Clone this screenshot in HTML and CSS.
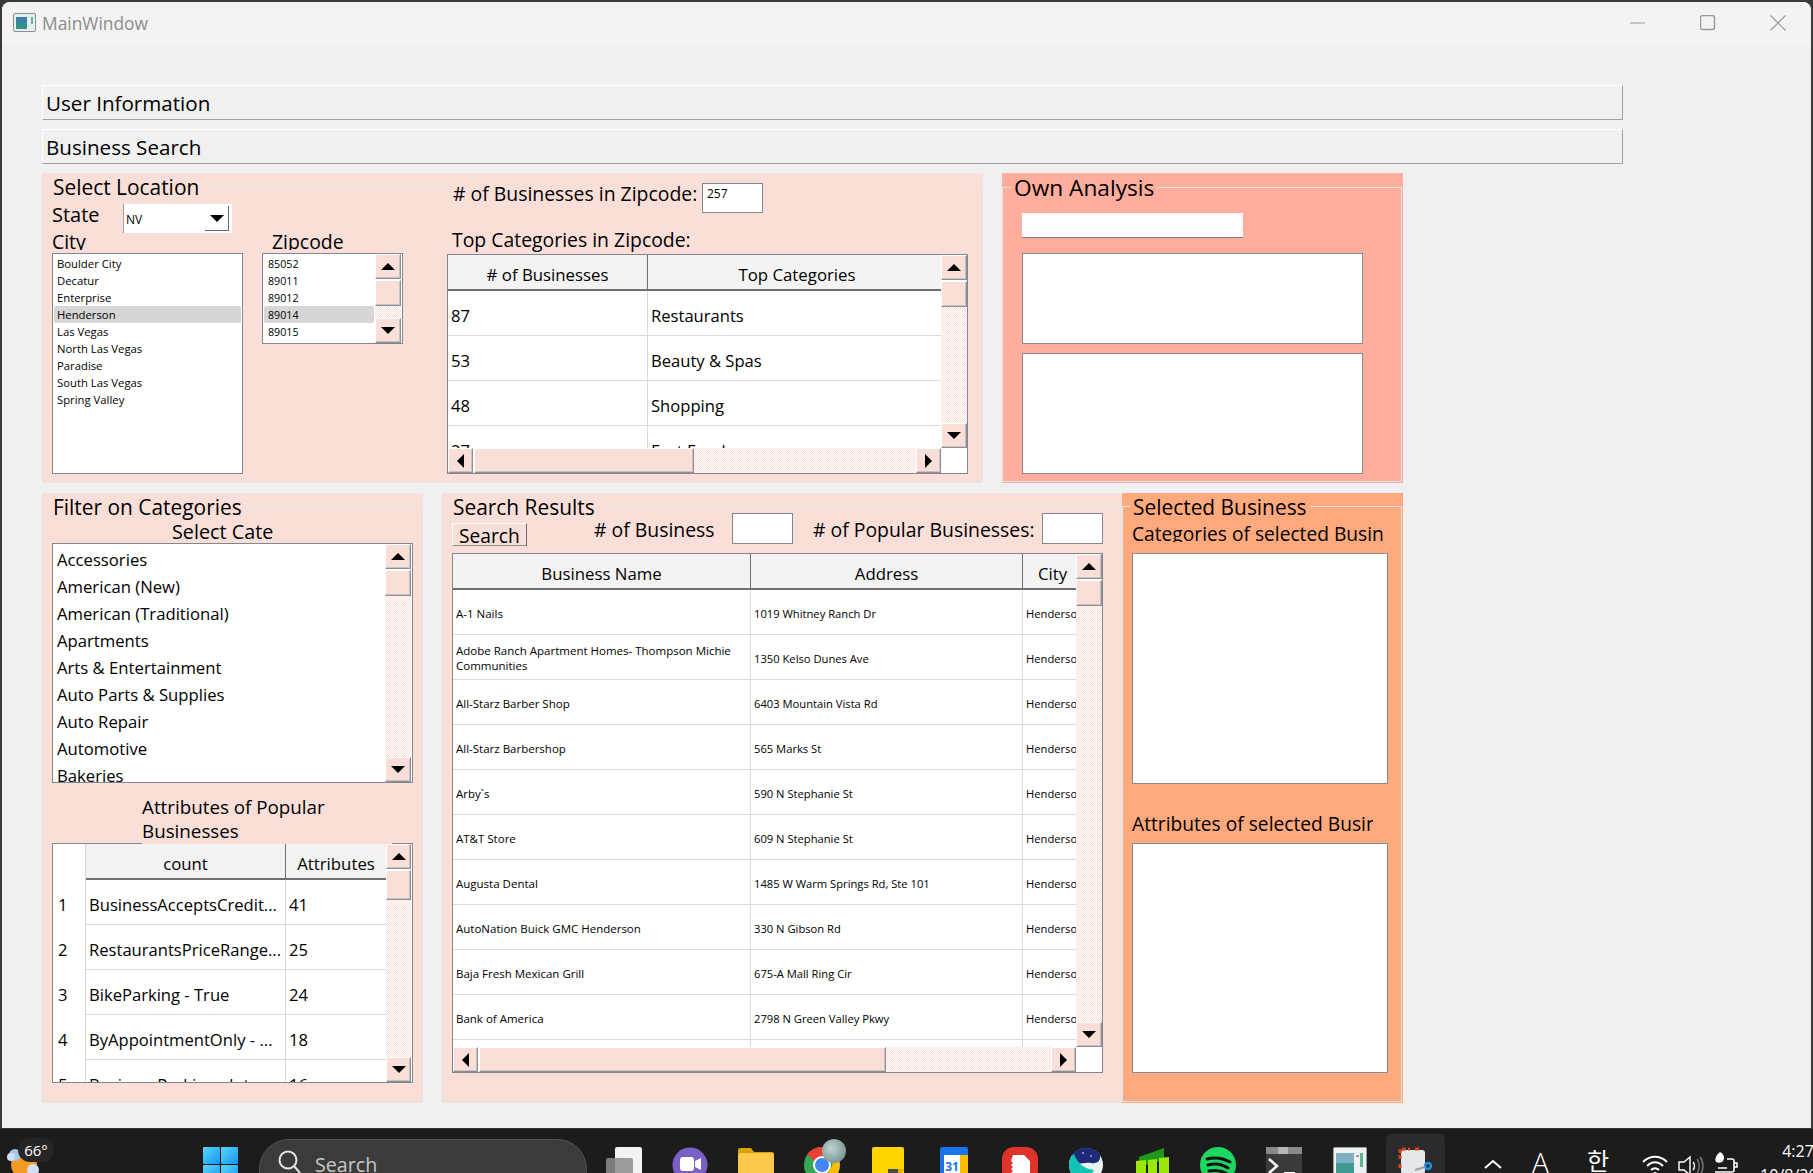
FILE: index.html
```html
<!DOCTYPE html>
<html lang="en">
<head>
  <meta charset="UTF-8" />
  <title>MainWindow</title>
  <link rel="stylesheet" href="styles.css">
</head>
<body>
  <div class="window">
    <div class="titlebar">
      <svg class="app-icon" width="23" height="19" viewBox="0 0 23 19">
        <rect x="0.5" y="0.5" width="22" height="18" rx="1.5" fill="#e9eef0" stroke="#8a8f94"/>
        <rect x="3" y="4" width="11" height="12" fill="#2f8f8a"/>
        <rect x="3" y="4" width="11" height="5" fill="#3b7fb0"/>
        <rect x="18" y="4" width="2" height="7" fill="#5bb98f"/>
      </svg>
      <span class="app-title">MainWindow</span>
      <div class="win-controls">
        <div class="win-btn"><svg width="16" height="16" viewBox="0 0 16 16"><path d="M0 8h15" stroke="#9a9a9a"/></svg></div>
        <div class="win-btn"><svg width="16" height="16" viewBox="0 0 16 16"><rect x="0.5" y="0.5" width="14" height="14" rx="2" fill="none" stroke="#9a9a9a" stroke-width="1.4"/></svg></div>
        <div class="win-btn"><svg width="16" height="16" viewBox="0 0 16 16"><path d="M0.5 0.5l15 15M15.5 0.5l-15 15" stroke="#9a9a9a" stroke-width="1.2"/></svg></div>
      </div>
    </div>

    <div class="main">
      <div class="bar">User Information</div>
      <div class="bar">Business Search</div>

      <div class="row row-top">
        <section class="panel panel-location">
          <div class="group group-location">
            <div class="loc-left">
              <div class="legend">Select Location</div>
              <div class="state-row">
                <span class="state-label">State</span>
                <div class="combo">
                  <span>NV</span>
                  <div class="combo-arrow"><i class="tri tri-down"></i></div>
                </div>
              </div>
              <div class="loc-lists">
                <div>
                  <div class="clip-label">City</div>
                  <ul class="list list-small list-city">
                    <li>Boulder City</li>
                    <li>Decatur</li>
                    <li>Enterprise</li>
                    <li class="selected">Henderson</li>
                    <li>Las Vegas</li>
                    <li>North Las Vegas</li>
                    <li>Paradise</li>
                    <li>South Las Vegas</li>
                    <li>Spring Valley</li>
                  </ul>
                </div>
                <div>
                  <div class="clip-label zip-label">Zipcode</div>
                  <div class="list-scroll list-zip">
                    <ul class="list list-small">
                      <li>85052</li>
                      <li>89011</li>
                      <li>89012</li>
                      <li class="selected">89014</li>
                      <li>89015</li>
                    </ul>
                    <div class="sb-v">
                      <div class="sb-btn"><i class="tri tri-up"></i></div>
                      <div class="sb-thumb"></div>
                      <div class="sb-track"></div>
                      <div class="sb-btn"><i class="tri tri-down"></i></div>
                    </div>
                  </div>
                </div>
              </div>
            </div>

            <div class="loc-right">
              <div class="count-row">
                <span class="count-label"># of Businesses in Zipcode:</span>
                <div class="box count-box">257</div>
              </div>
              <div class="top-label">Top Categories in Zipcode:</div>
              <div class="table-view top-table">
                <div class="table-clip">
                  <table>
                    <thead><tr><th class="w-200"># of Businesses</th><th>Top Categories</th></tr></thead>
                    <tbody>
                      <tr><td>87</td><td>Restaurants</td></tr>
                      <tr><td>53</td><td>Beauty &amp; Spas</td></tr>
                      <tr><td>48</td><td>Shopping</td></tr>
                      <tr><td>27</td><td>Fast Food</td></tr>
                    </tbody>
                  </table>
                </div>
                <div class="sb-v">
                  <div class="sb-btn"><i class="tri tri-up"></i></div>
                  <div class="sb-thumb"></div>
                  <div class="sb-track"></div>
                  <div class="sb-btn"><i class="tri tri-down"></i></div>
                </div>
                <div class="sb-h">
                  <div class="sb-btn"><i class="tri tri-left"></i></div>
                  <div class="sb-thumb thumb-top"></div>
                  <div class="sb-track"></div>
                  <div class="sb-btn"><i class="tri tri-right"></i></div>
                </div>
                <div class="corner"></div>
              </div>
            </div>
          </div>
        </section>

        <section class="panel panel-own">
          <div class="group group-own">
            <div class="legend legend-own">Own Analysis</div>
            <div class="own-input"></div>
            <div class="box own-box-a"></div>
            <div class="box own-box-b"></div>
          </div>
        </section>
      </div>

      <div class="row row-bottom">
        <section class="panel panel-filter">
          <div class="group group-stack">
            <div class="legend">Filter on Categories</div>
            <div class="select-label">Select Cate</div>
            <div class="list-scroll list-cats">
              <ul class="list list-large">
                <li>Accessories</li>
                <li>American (New)</li>
                <li>American (Traditional)</li>
                <li>Apartments</li>
                <li>Arts &amp; Entertainment</li>
                <li>Auto Parts &amp; Supplies</li>
                <li>Auto Repair</li>
                <li>Automotive</li>
                <li>Bakeries</li>
              </ul>
              <div class="sb-v">
                <div class="sb-btn"><i class="tri tri-up"></i></div>
                <div class="sb-thumb"></div>
                <div class="sb-track"></div>
                <div class="sb-btn"><i class="tri tri-down"></i></div>
              </div>
            </div>
            <div class="attr-label">Attributes of Popular Businesses</div>
            <div class="table-view attr-table">
              <div class="table-clip">
                <table>
                  <thead><tr><th class="row-head"></th><th class="w-200">count</th><th>Attributes</th></tr></thead>
                  <tbody>
                    <tr><td class="row-head">1</td><td>BusinessAcceptsCredit...</td><td>41</td></tr>
                    <tr><td class="row-head">2</td><td>RestaurantsPriceRange...</td><td>25</td></tr>
                    <tr><td class="row-head">3</td><td>BikeParking - True</td><td>24</td></tr>
                    <tr><td class="row-head">4</td><td>ByAppointmentOnly - ...</td><td>18</td></tr>
                    <tr><td class="row-head">5</td><td>BusinessParking - lot</td><td>16</td></tr>
                  </tbody>
                </table>
              </div>
              <div class="sb-v">
                <div class="sb-btn"><i class="tri tri-up"></i></div>
                <div class="sb-thumb thumb-attr"></div>
                <div class="sb-track"></div>
                <div class="sb-btn"><i class="tri tri-down"></i></div>
              </div>
            </div>
          </div>
        </section>

        <section class="panel panel-results">
          <div class="group group-stack">
            <div class="legend">Search Results</div>
            <div class="results-head">
              <div class="search-btn">Search</div>
              <span class="res-label res-label-a"># of Business</span>
              <div class="box res-box"></div>
              <span class="res-label res-label-b"># of Popular Businesses:</span>
              <div class="box res-box"></div>
            </div>
            <div class="table-view results-table">
              <div class="table-clip">
                <table>
                  <thead><tr><th class="w-298">Business Name</th><th class="w-272">Address</th><th>City</th></tr></thead>
                  <tbody>
                    <tr><td>A-1 Nails</td><td>1019 Whitney Ranch Dr</td><td>Henderson</td></tr>
                    <tr><td>Adobe Ranch Apartment Homes- Thompson Michie Communities</td><td>1350 Kelso Dunes Ave</td><td>Henderson</td></tr>
                    <tr><td>All-Starz Barber Shop</td><td>6403 Mountain Vista Rd</td><td>Henderson</td></tr>
                    <tr><td>All-Starz Barbershop</td><td>565 Marks St</td><td>Henderson</td></tr>
                    <tr><td>Arby`s</td><td>590 N Stephanie St</td><td>Henderson</td></tr>
                    <tr><td>AT&amp;T Store</td><td>609 N Stephanie St</td><td>Henderson</td></tr>
                    <tr><td>Augusta Dental</td><td>1485 W Warm Springs Rd, Ste 101</td><td>Henderson</td></tr>
                    <tr><td>AutoNation Buick GMC Henderson</td><td>330 N Gibson Rd</td><td>Henderson</td></tr>
                    <tr><td>Baja Fresh Mexican Grill</td><td>675-A Mall Ring Cir</td><td>Henderson</td></tr>
                    <tr><td>Bank of America</td><td>2798 N Green Valley Pkwy</td><td>Henderson</td></tr>
                    <tr><td></td><td></td><td></td></tr>
                  </tbody>
                </table>
              </div>
              <div class="sb-v">
                <div class="sb-btn"><i class="tri tri-up"></i></div>
                <div class="sb-thumb"></div>
                <div class="sb-track"></div>
                <div class="sb-btn"><i class="tri tri-down"></i></div>
              </div>
              <div class="sb-h">
                <div class="sb-btn"><i class="tri tri-left"></i></div>
                <div class="sb-thumb thumb-results"></div>
                <div class="sb-track"></div>
                <div class="sb-btn"><i class="tri tri-right"></i></div>
              </div>
              <div class="corner"></div>
            </div>
          </div>
        </section>

        <section class="panel panel-selected">
          <div class="group group-stack">
            <div class="legend">Selected Business</div>
            <div class="sel-label sel-label-a">Categories of selected Busin</div>
            <div class="box sel-box"></div>
            <div class="sel-label sel-label-b">Attributes of selected Busin</div>
            <div class="box sel-box sel-box-b"></div>
          </div>
        </section>
      </div>
    </div>
  </div>

  <div class="taskbar">
    <div class="weather">
      <svg width="40" height="30" viewBox="0 0 40 30">
        <circle cx="20" cy="20" r="13" fill="#f59a23"/>
        <circle cx="11" cy="10" r="6" fill="#a9c6ee"/>
        <circle cx="7" cy="12" r="4" fill="#cfe0f7"/>
        <circle cx="29" cy="25" r="6" fill="#cfe0f7"/>
      </svg>
      <span class="temp">66°</span>
    </div>
    <div class="tb-item">
      <svg width="35" height="35" viewBox="0 0 35 35">
        <defs><linearGradient id="winblue" x1="0" y1="0" x2="1" y2="1"><stop offset="0" stop-color="#5ad6f7"/><stop offset="1" stop-color="#1495f3"/></linearGradient></defs>
        <rect width="17" height="17" rx="1" fill="url(#winblue)"/>
        <rect x="18" width="17" height="17" rx="1" fill="url(#winblue)"/>
        <rect y="18" width="17" height="17" rx="1" fill="url(#winblue)"/>
        <rect x="18" y="18" width="17" height="17" rx="1" fill="url(#winblue)"/>
      </svg>
    </div>
    <div class="search-pill">
      <svg width="24" height="28" viewBox="0 0 24 28"><circle cx="11" cy="11" r="8.5" fill="none" stroke="#e4e4e4" stroke-width="2"/><path d="M17 17l6 7" stroke="#e4e4e4" stroke-width="2"/></svg>
      <span>Search</span>
    </div>
    <div class="tb-apps">
      <div class="tb-item">
        <svg width="36" height="36" viewBox="0 0 36 36"><rect x="9" y="0" width="27" height="28" rx="2" fill="#f2f2f2"/><rect x="0" y="11" width="27" height="25" rx="2" fill="#8c8c8c" fill-opacity="0.85"/></svg>
      </div>
      <div class="tb-item">
        <svg width="36" height="36" viewBox="0 0 36 36"><circle cx="18" cy="18" r="17.5" fill="#7a5fc4"/><rect x="8" y="10" width="14" height="14" rx="3" fill="#fff"/><path d="M23 14l6-3v12l-6-3z" fill="#fff"/></svg>
      </div>
      <div class="tb-item">
        <svg width="36" height="36" viewBox="0 0 36 36"><path d="M0 3a2 2 0 0 1 2-2h11l3 4h18a2 2 0 0 1 2 2v10H0z" fill="#d9a20b"/><rect y="6" width="36" height="30" rx="2" fill="#fdc94a"/><rect x="9" y="26" width="18" height="10" rx="2" fill="#1d8ae0"/></svg>
      </div>
      <div class="tb-item has-badge">
        <svg width="36" height="36" viewBox="0 0 36 36"><circle cx="18" cy="18" r="18" fill="#35a853"/><path d="M18 0a18 18 0 0 1 16 10H18a8 8 0 0 0-7 4L3 8A18 18 0 0 1 18 0z" fill="#ea4335"/><path d="M34 10a18 18 0 0 1-16 26l8-14a8 8 0 0 0 0-12z" fill="#fbbc05"/><circle cx="18" cy="18" r="9" fill="#fff"/><circle cx="18" cy="18" r="7" fill="#4285f4"/></svg>
        <span class="avatar"></span>
      </div>
      <div class="tb-item">
        <svg width="32" height="36" viewBox="0 0 32 36"><rect width="32" height="36" rx="2" fill="#ffd600"/><path d="M16 36V22h16L16 36z" fill="#4a4a4a"/><path d="M26 22h6l-6 6z" fill="#f2a900"/></svg>
      </div>
      <div class="tb-item">
        <svg width="28" height="36" viewBox="0 0 28 36"><rect width="28" height="36" rx="2" fill="#1a73e8"/><rect x="18" y="8" width="10" height="22" fill="#fbbc04"/><rect x="0" y="28" width="28" height="8" fill="#34a853"/><rect x="4" y="8" width="16" height="20" fill="#fff"/><text x="12" y="24" class="cal-num">31</text></svg>
      </div>
      <div class="tb-item">
        <svg width="36" height="36" viewBox="0 0 36 36"><rect width="36" height="36" rx="12" fill="#e0342a"/><path d="M11 8h11l6 6v18H11l-2-2 2-2-2-2 2-2-2-2 2-2-2-2 2-2-2-2z" fill="#fff"/></svg>
      </div>
      <div class="tb-item">
        <svg width="34" height="36" viewBox="0 0 34 36"><circle cx="17" cy="18" r="17" fill="#e8f4f2"/><path d="M3 8a17 17 0 0 1 28 0c1 6-3 9-9 8-7-1-12 2-15 0z" fill="#1f2a78"/><path d="M0 18c0-5 3-10 5-11 3 8 9 15 20 16-3 5-7 13-10 13-9-2-15-10-15-18z" fill="#12c4b6"/><circle cx="14" cy="6" r="0.8" fill="#fff"/><circle cx="22" cy="9" r="0.8" fill="#fff"/></svg>
      </div>
      <div class="tb-item">
        <svg width="33" height="36" viewBox="0 0 33 36"><path d="M3 10L28 1v12L3 20z" fill="#1f9a1a"/><path d="M0 14l10-1v23H0zM12 13l9-1v24h-9zM23 11l10-1v22l-10 4z" fill="#9be80a"/></svg>
      </div>
      <div class="tb-item">
        <svg width="36" height="36" viewBox="0 0 36 36"><circle cx="18" cy="18" r="18" fill="#1ed760"/><path d="M7 12c8-2 16-1 23 3M8 18c7-2 14-1 20 3M9 24c6-1 11-1 17 2" fill="none" stroke="#111" stroke-width="3" stroke-linecap="round"/></svg>
      </div>
      <div class="tb-item">
        <svg width="36" height="36" viewBox="0 0 36 36"><rect width="36" height="36" rx="2" fill="#3a3a3a"/><rect width="36" height="7" fill="#8a8a8a"/><rect x="12" width="10" height="7" fill="#b5b5b5"/><path d="M3 12l8 7-8 7" fill="none" stroke="#fff" stroke-width="2.5"/><rect x="18" y="25" width="11" height="4" fill="#fff"/></svg>
      </div>
      <div class="tb-item">
        <svg width="34" height="36" viewBox="0 0 34 36"><rect x="0.5" y="0.5" width="33" height="35" rx="1" fill="#eef1f2" stroke="#9aa0a4"/><rect x="3" y="6" width="18" height="24" fill="#3f9a92"/><rect x="3" y="6" width="18" height="10" fill="#7fb0c4"/><rect x="27" y="6" width="3" height="14" fill="#5bb98f"/><rect x="23" y="8" width="3" height="2" fill="#9aa0a4"/></svg>
      </div>
      <div class="tb-item tb-active">
        <svg width="36" height="36" viewBox="0 0 36 36"><rect x="3" y="3" width="24" height="24" rx="3" fill="#e4e8ea"/><path d="M2 12V2h10M17 2h6M2 17v6" fill="none" stroke="#d9401a" stroke-width="3" stroke-dasharray="4 2"/><circle cx="30" cy="19" r="3" fill="none" stroke="#1c93e4" stroke-width="2.4"/><path d="M27 20l-10 3" stroke="#9aa0a4" stroke-width="2"/></svg>
      </div>
    </div>
    <div class="tray">
      <svg class="tray-chevron" width="18" height="10" viewBox="0 0 18 10"><path d="M1 9l8-7 8 7" fill="none" stroke="#fff" stroke-width="2"/></svg>
      <span class="tray-a">A</span>
      <span class="tray-ko">한</span>
      <svg class="tray-icon tray-wifi" width="26" height="22" viewBox="0 0 26 22"><path d="M1 7c7-7 17-7 24 0M5 11c5-5 11-5 16 0M9 15c2.500-2.500 5.500-2.500 8 0" fill="none" stroke="#fff" stroke-width="2"/><circle cx="13" cy="19" r="2" fill="#fff"/></svg>
      <svg class="tray-icon" width="26" height="22" viewBox="0 0 26 22"><path d="M1 7h5l6-5v18l-6-5H1z" fill="none" stroke="#fff" stroke-width="1.400"/><path d="M15 7c2 2 2 6 0 8" fill="none" stroke="#fff" stroke-width="1.400"/><path d="M19 4c3 4 3 10 0 14M22 2c4 5 4 13 0 18" fill="none" stroke="#777" stroke-width="1.400"/></svg>
      <svg class="tray-icon tray-battery" width="26" height="22" viewBox="0 0 26 22"><path d="M6 0c4 2 5 6 3 9-1 2-5 2-7 1C0 7 3 2 6 0z" fill="#fff"/><path d="M1 20h17a2 2 0 0 0 2-2V9a2 2 0 0 0-2-2h-5M20 11h3v4h-3M4 16h9" fill="none" stroke="#fff" stroke-width="1.600"/></svg>
      <div class="clock"><span>4:27</span><span>10/8/2023</span></div>
    </div>
  </div>
</body>
</html>
```
FILE: styles.css
```css
:root {
  --pink: #fadfd9;
  --salmon: #ffad9d;
  --orange: #ffa97d;
  --line: #e3e3e3;
  --box-line: #828790;
}

* {
  box-sizing: border-box;
}

html, body {
  height: 1173px;
  margin: 0;
  overflow: hidden;
}

body {
  background: #3a3a3a;
  color: #000;
  font-family: "Open Sans", "Noto Sans", sans-serif;
  padding-top: 2px;
}

/* window chrome */
.window {
  width: 1809px;
  height: 1126px;
  margin-left: 2px;
  background: #f0f0f0;
  border-radius: 8px 8px 0 0;
  overflow: hidden;
}
.titlebar {
  display: flex;
  align-items: center;
  height: 43px;
  padding: 0 0 2px 11px;
  background: #f3f3f3;
}
.app-title {
  margin-left: 6px;
  font-size: 17.4px;
  color: #8c8c8c;
}
.win-controls {
  display: flex;
  margin: 0 -2px 0 auto;
}
.win-btn {
  display: flex;
  align-items: center;
  justify-content: center;
  width: 70px;
}

.main {
  padding: 40px 0 0 40px;
}
.bar {
  width: 1581px;
  height: 35px;
  margin-bottom: 9px;
  padding-left: 3px;
  border: 1px solid;
  border-color: #fff #a0a0a0 #a0a0a0 #fff;
  font-size: 20.6px;
  line-height: 34px;
}
.row {
  display: flex;
}
.row-top {
  gap: 19px;
  height: 310px;
}
.row-bottom {
  margin-top: 10px;
  height: 610px;
}

/* group boxes */
.panel {
  padding: 13px 1px 1px 0;
  background: var(--panel);
}
.panel-location { --panel: var(--pink); width: 941px; }
.panel-own { --panel: var(--salmon); width: 401px; padding-top: 14px; }
.panel-filter { --panel: var(--pink); width: 381px; margin-right: 19px; }
.panel-results { --panel: var(--pink); width: 680px; }
.panel-selected { --panel: var(--orange); width: 281px; }

.group {
  height: 100%;
  padding-left: 9px;
  border: 1px solid var(--line);
}
.group-stack {
  display: flex;
  flex-direction: column;
}
.legend {
  align-self: flex-start;
  width: max-content;
  height: 26px;
  margin: -13px 0 0 -2px;
  padding: 0 3px;
  background: var(--panel);
  font-size: 20.9px;
  line-height: 26px;
}

/* Select Location */
.group-location {
  display: grid;
  grid-template-columns: 351px 521px;
  column-gap: 44px;
}
.state-row {
  display: flex;
  height: 29px;
  margin-top: 4px;
}
.state-label {
  width: 71px;
  font-size: 20px;
  line-height: 22px;
}
.combo {
  display: flex;
  align-items: center;
  width: 109px;
  padding: 0 3px 0 2px;
  background: #fff;
  border-left: 1px solid #a0a0a0;
  font-size: 12px;
}
.combo span {
  flex: 1;
  padding-top: 2px;
}
.combo-arrow {
  display: flex;
  align-items: center;
  justify-content: center;
  width: 24px;
  height: 25px;
  border-right: 1px solid #696969;
  border-bottom: 1px solid #696969;
}
.loc-lists {
  display: grid;
  grid-template-columns: 191px 141px;
  column-gap: 19px;
}
.clip-label {
  height: 17px;
  margin-bottom: 3px;
  overflow: hidden;
  font-size: 19.4px;
  line-height: 18px;
}
.zip-label {
  padding-left: 10px;
}

.list {
  margin: 0;
  padding: 1px;
  list-style: none;
  white-space: nowrap;
  overflow: hidden;
}
.list-small {
  font-size: 11.3px;
  line-height: 17px;
}
.list-small li {
  padding-left: 3px;
  border-radius: 2px;
}
.list-small .selected {
  background: #d6d6d6;
}
.list-city {
  height: 221px;
  background: #fff;
  border: 1px solid var(--box-line);
}
.list-scroll {
  display: flex;
  background: #fff;
  border: 1px solid var(--box-line);
}
.list-scroll .list {
  flex: 1;
  min-width: 0;
}
.list-scroll .sb-v {
  margin-right: 1px;
}
.list-zip {
  height: 91px;
}
.list-zip .list-small {
  font-size: 10.7px;
}
.list-zip li {
  padding: 1px 0 0 4px;
  line-height: 16px;
}
.list-cats {
  width: 361px;
  height: 240px;
}
.list-large {
  padding-top: 2px;
  font-size: 16.7px;
  line-height: 27px;
}
.list-large li {
  padding-left: 3px;
}

/* native looking scrollbars */
.sb-v, .sb-h {
  display: flex;
  flex: none;
}
.sb-v {
  flex-direction: column;
  width: 26px;
}
.sb-h {
  height: 25px;
}
.sb-btn, .sb-thumb {
  flex: none;
  background: var(--pink);
  border: 1px solid;
  border-color: #fff #8f8f8f #8f8f8f #fff;
  box-shadow: inset -1px -1px 0 #c4c4c4;
}
.sb-btn {
  display: flex;
  align-items: center;
  justify-content: center;
}
.sb-v .sb-btn { height: 25px; }
.sb-h .sb-btn { width: 25px; }
.sb-v .sb-thumb { height: 26px; margin-top: 1px; }
.sb-h .sb-thumb { margin-left: 1px; }
.sb-v .thumb-attr { height: 30px; }
.thumb-top { width: 220px; }
.thumb-results { width: 407px; }
.sb-track {
  flex: 1;
  background: repeating-conic-gradient(#fff 0 25%, var(--pink) 0 50%) 0 0 / 2px 2px;
}
.tri {
  width: 0;
  height: 0;
  border: 6px solid transparent;
}
.tri-up { border-top: 0; border-bottom: 7px solid #000; border-left-width: 7px; border-right-width: 7px; }
.tri-down { border-bottom: 0; border-top: 7px solid #000; border-left-width: 7px; border-right-width: 7px; }
.tri-left { border-left: 0; border-right: 7px solid #000; border-top-width: 7px; border-bottom-width: 7px; }
.tri-right { border-right: 0; border-left: 7px solid #000; border-top-width: 7px; border-bottom-width: 7px; }

/* tables */
.table-view {
  display: grid;
  grid-template-columns: 1fr 26px;
  grid-template-rows: 1fr 25px;
  background: #fff;
  border: 1px solid var(--box-line);
}
.table-clip {
  min-width: 0;
  min-height: 0;
  overflow: hidden;
}
.corner {
  background: #fff;
}
table {
  width: 100%;
  table-layout: fixed;
  border-collapse: separate;
  border-spacing: 0;
  font-size: 16.6px;
}
th {
  height: 36px;
  padding: 4px 2px 0;
  background: #f3f3f3;
  border-right: 1px solid #6f6f6f;
  border-bottom: 2px solid #6f6f6f;
  font-size: 16.8px;
  font-weight: 400;
  white-space: nowrap;
}
td {
  height: 45px;
  padding: 4px 2px 0 3px;
  border-right: 1px solid #d9d9d9;
  border-bottom: 1px solid #d9d9d9;
  overflow: hidden;
}
th:last-child, td:last-child {
  border-right: 0;
}
.w-200 { width: 200px; }
.w-298 { width: 298px; }
.w-272 { width: 272px; }

.loc-right {
  margin-top: -4px;
}
.count-row {
  display: flex;
  height: 30px;
  margin-left: 4px;
  background: var(--panel);
}
.count-label {
  width: 251px;
  padding-left: 2px;
  font-size: 19.4px;
  line-height: 22px;
  white-space: nowrap;
}
.box {
  background: #fff;
  border: 1px solid var(--box-line);
}
.count-box {
  width: 61px;
  padding: 1px 4px;
  font-size: 12px;
}
.top-label {
  height: 41px;
  padding: 13px 0 0 5px;
  font-size: 19.4px;
  line-height: 27px;
}
.top-table {
  width: 521px;
  height: 220px;
}
.top-table th:last-child {
  padding-left: 7px;
}

/* Own Analysis */
.group-own {
  display: flex;
  flex-direction: column;
  padding-left: 19px;
}
.legend-own {
  margin: -14px 0 0 -11px;
  font-size: 22.7px;
  line-height: 28px;
}
.own-input {
  width: 221px;
  height: 25px;
  margin-top: 13px;
  background: #fff;
  border-bottom: 1px solid #808080;
}
.own-box-a, .own-box-b {
  width: 341px;
}
.own-box-a {
  height: 91px;
  margin-top: 15px;
}
.own-box-b {
  height: 121px;
  margin-top: 9px;
}

/* Filter on Categories */
.select-label {
  height: 23px;
  padding-left: 120px;
  font-size: 19.8px;
  line-height: 24px;
  overflow: hidden;
}
.attr-label {
  position: relative;
  z-index: 1;
  width: 250px;
  height: 61px;
  margin-left: 90px;
  padding-top: 12px;
  background: var(--panel);
  font-size: 18.8px;
  line-height: 24px;
}
.attr-table {
  width: 361px;
  height: 240px;
  margin-top: -1px;
  grid-template-rows: 1fr;
}
.attr-table .sb-v {
  margin-right: 1px;
  width: 25px;
}
.row-head {
  width: 33px;
  background: #fff;
  border-bottom: 0;
  border-right: 1px solid #d9d9d9;
  padding: 4px 0 0 5px;
}

/* Search Results */
.results-head {
  display: flex;
  height: 31px;
  margin-top: -7px;
}
.search-btn {
  width: 75px;
  height: 23px;
  margin-top: 10px;
  padding-left: 6px;
  background: var(--pink);
  border: 1px solid;
  border-color: #fff #696969 #8f8f8f #fff;
  font-size: 19.2px;
  line-height: 23px;
  overflow: hidden;
}
.res-label {
  font-size: 19.4px;
  line-height: 34px;
  white-space: nowrap;
}
.res-label-a {
  width: 138px;
  margin-left: 67px;
}
.res-label-b {
  width: 229px;
  margin-left: 20px;
}
.res-box {
  width: 61px;
}
.results-table {
  width: 651px;
  height: 520px;
  margin-top: 9px;
}
.results-table th:last-child {
  padding-left: 8px;
}
.results-table td {
  padding-top: 2px;
  font-size: 11.2px;
  line-height: 15px;
}
.results-table td:first-child {
  font-size: 11.5px;
}
.results-table td:last-child {
  white-space: nowrap;
}

/* Selected Business */
.sel-label {
  flex: none;
  overflow: hidden;
  font-size: 19.2px;
  white-space: nowrap;
}
.sel-label-a {
  width: 252px;
  height: 20px;
  margin-top: 2px;
  margin-bottom: 11px;
  line-height: 24px;
}
.sel-label-b {
  width: 241px;
  height: 26px;
  margin-top: 27px;
  margin-bottom: 6px;
  line-height: 26px;
}
.sel-box {
  flex: none;
  width: 256px;
  height: 231px;
}
.sel-box-b {
  height: 230px;
}

/* taskbar */
.taskbar {
  display: flex;
  height: 45px;
  background: #1c1c1c;
  border-top: 1px solid #333;
  color: #fff;
}
.weather {
  position: relative;
  flex: none;
  width: 187px;
  padding: 16px 0 0 4px;
}
.temp {
  position: absolute;
  top: 9px;
  left: 18px;
  width: 36px;
  height: 24px;
  background: #262626;
  border-radius: 12px;
  font-size: 15px;
  line-height: 24px;
  text-align: center;
}
.tb-apps {
  display: flex;
  flex: none;
  margin-left: 4px;
}
.tb-item {
  position: relative;
  display: flex;
  justify-content: center;
  flex: none;
  width: 66px;
  padding-top: 18px;
}
.avatar {
  position: absolute;
  top: 10px;
  left: 33px;
  width: 24px;
  height: 24px;
  background: radial-gradient(circle at 40% 40%, #c0d4d2, #5f817f);
  border-radius: 50%;
}
.cal-num {
  font-size: 12px;
  font-weight: 700;
  fill: #1a73e8;
  text-anchor: middle;
}
.tb-active::before {
  content: "";
  position: absolute;
  top: 5px;
  left: 3px;
  width: 59px;
  height: 60px;
  background: #2b2b2b;
  border-radius: 6px;
}
.tb-active svg {
  position: relative;
}
.search-pill {
  display: flex;
  flex: none;
  align-items: flex-start;
  gap: 14px;
  width: 328px;
  height: 60px;
  margin: 10px 0 0 6px;
  padding: 9px 0 0 17px;
  background: #3b3b3b;
  border: 1px solid #555;
  border-radius: 30px;
  color: #c9c9c9;
  font-size: 19.7px;
  line-height: 32px;
}
.tray {
  display: flex;
  flex: none;
  margin-left: 35px;
}
.tray-chevron {
  flex: none;
  margin-top: 30px;
}
.tray-a {
  width: 18px;
  margin: 13px 0 0 30px;
  font-size: 28px;
  font-weight: 300;
  line-height: 40px;
}
.tray-ko {
  width: 24px;
  margin: 13px 0 0 37px;
  font-family: "Noto Sans CJK KR", sans-serif;
  font-size: 24px;
  line-height: 36px;
}
.tray-icon {
  flex: none;
  margin: 26px 0 0 10px;
}
.tray-wifi {
  margin-left: 31px;
}
.tray-battery {
  margin-top: 23px;
}
.clock {
  display: flex;
  flex-direction: column;
  align-items: center;
  flex: none;
  width: 78px;
  margin-left: 19px;
  padding-top: 10px;
  font-size: 16px;
  line-height: 24px;
}
```
